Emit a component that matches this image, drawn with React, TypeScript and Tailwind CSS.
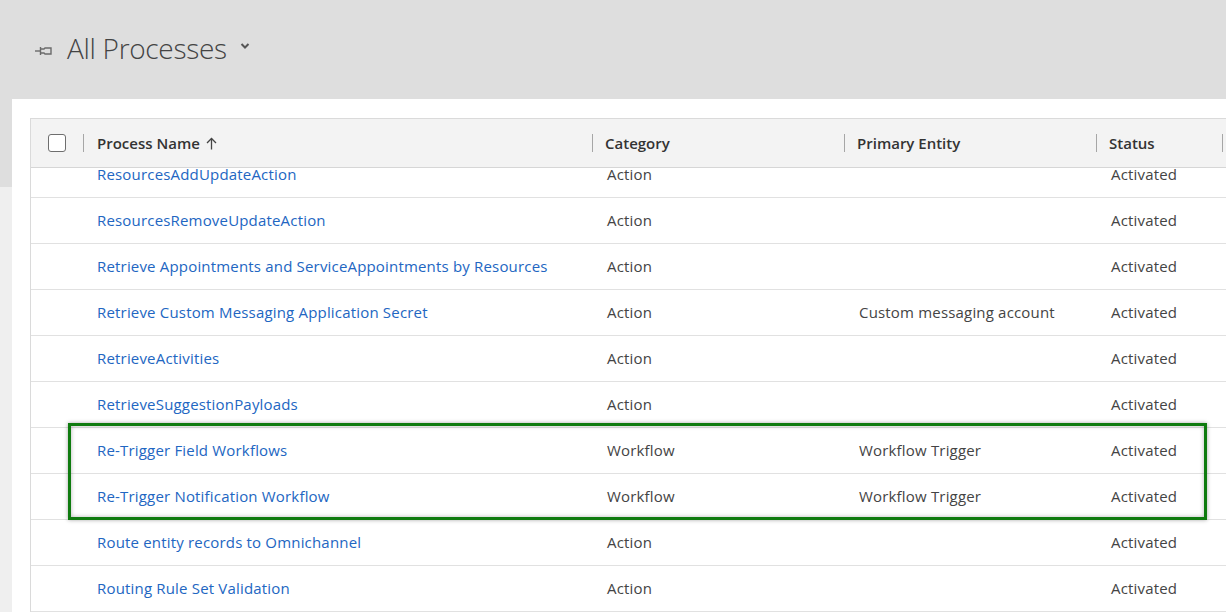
import React from "react";

const rows = [
  { name: "ResourcesRemoveUpdateAction", cat: "Action", ent: "", st: "Activated" },
  { name: "Retrieve Appointments and ServiceAppointments by Resources", cat: "Action", ent: "", st: "Activated" },
  { name: "Retrieve Custom Messaging Application Secret", cat: "Action", ent: "Custom messaging account", st: "Activated" },
  { name: "RetrieveActivities", cat: "Action", ent: "", st: "Activated" },
  { name: "RetrieveSuggestionPayloads", cat: "Action", ent: "", st: "Activated" },
  { name: "Re-Trigger Field Workflows", cat: "Workflow", ent: "Workflow Trigger", st: "Activated" },
  { name: "Re-Trigger Notification Workflow", cat: "Workflow", ent: "Workflow Trigger", st: "Activated" },
  { name: "Route entity records to Omnichannel", cat: "Action", ent: "", st: "Activated" },
  { name: "Routing Rule Set Validation", cat: "Action", ent: "", st: "Activated" },
];

function Sep() {
  return <div className="w-px h-[18px] bg-[#a6a6a6] shrink-0" />;
}

function Cells({ r }: { r: { name: string; cat: string; ent: string; st: string } }) {
  return (
    <>
      <div className="w-[66px] shrink-0" />
      <div className="w-[510px] shrink-0 text-[#2266c2] whitespace-nowrap">{r.name}</div>
      <div className="w-[252px] shrink-0 text-[#444]">{r.cat}</div>
      <div className="w-[252px] shrink-0 text-[#444]">{r.ent}</div>
      <div className="text-[#444]">{r.st}</div>
    </>
  );
}

export default function App() {
  return (
    <div
      className="w-[1226px] h-[612px] overflow-hidden bg-[#dedede] flex flex-col"
      style={{ fontFamily: '"Open Sans", "Noto Sans", sans-serif' }}
    >
      <div className="h-[99px] shrink-0 flex items-center pl-[35px] pb-[4px]">
        <svg width="18" height="10" viewBox="0 0 18 10" className="mr-[14px] mt-[6px]" fill="none" stroke="#6b6b6b" strokeWidth="1.4">
          <path d="M0 5 H5" />
          <path d="M5.5 1 V9" />
          <path d="M5.5 3 H9 L10 2 H16 V8 H10 L9 7 H5.5" />
        </svg>
        <span className="text-[28px] font-light text-[#444] tracking-[-0.3px]">All Processes</span>
        <svg width="10" height="8" viewBox="0 0 10 8" className="ml-[13px] mb-[4px]" fill="none" stroke="#555" strokeWidth="2">
          <path d="M1.5 2 L5 5.5 L8.5 2" />
        </svg>
      </div>
      <div className="flex flex-1 min-h-0">
        <div className="w-[12px] shrink-0 flex flex-col">
          <div className="h-[88px] bg-[#dedede]" />
          <div className="flex-1 bg-[#efefef]" />
        </div>
        <div className="flex-1 bg-white pt-[19px] pl-[18px] min-w-0">
          <div className="border-l border-t border-[#dadada] h-full flex flex-col text-[15px]">
            <div className="h-[49px] shrink-0 bg-[#f3f3f3] border-b border-[#d6d6d6] flex items-center font-[550] text-[#333]">
              <div className="w-[52px] shrink-0 flex items-center pl-[17px]">
                <div className="w-[18px] h-[18px] border-[1.5px] border-[#6e6e6e] rounded-[3px] bg-white" />
              </div>
              <div className="w-[509px] shrink-0 flex items-center">
                <Sep />
                <span className="ml-[13px]">Process Name</span>
                <svg width="11" height="13" viewBox="0 0 11 13" className="ml-[6px]" fill="none" stroke="#444" strokeWidth="1.3">
                  <path d="M5.5 12.5 V1.5" />
                  <path d="M1 6 L5.5 1.5 L10 6" />
                </svg>
              </div>
              <div className="w-[252px] shrink-0 flex items-center">
                <Sep />
                <span className="ml-[12px]">Category</span>
              </div>
              <div className="w-[252px] shrink-0 flex items-center">
                <Sep />
                <span className="ml-[12px]">Primary Entity</span>
              </div>
              <div className="w-[126px] shrink-0 flex items-center">
                <Sep />
                <span className="ml-[12px]">Status</span>
              </div>
              <Sep />
            </div>
            <div className="relative flex-1 overflow-hidden tracking-[0.18px] leading-[16px]">
              <div className="h-[30px] border-b border-[#e1e1e1] flex items-start leading-[12px]">
                <Cells r={{ name: "ResourcesAddUpdateAction", cat: "Action", ent: "", st: "Activated" }} />
              </div>
              {rows.map((r) => (
                <div key={r.name} className="h-[46px] pb-[2px] border-b border-[#e1e1e1] flex items-center">
                  <Cells r={r} />
                </div>
              ))}
              <div className="absolute left-[37px] top-[255px] w-[1139px] h-[97px] border-[3px] border-[#0f7b0f] shadow-[0_0_4px_rgba(0,0,0,0.35),inset_0_0_4px_rgba(0,0,0,0.3)]" />
            </div>
          </div>
        </div>
      </div>
    </div>
  );
}
